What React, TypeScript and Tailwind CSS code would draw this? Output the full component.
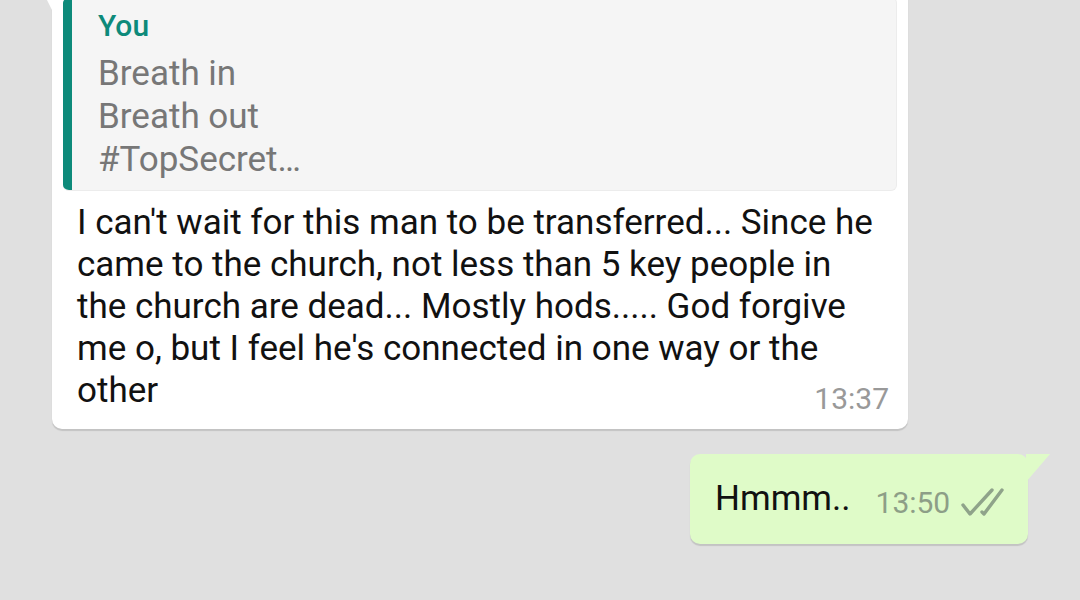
import React from "react";

export default function App() {
  const font = { fontFamily: "Roboto, 'Noto Sans', sans-serif" };
  return (
    <div className="w-[1080px] h-[600px] bg-[#e0e0e0] overflow-hidden" style={font}>
      {/* incoming */}
      <div className="relative ml-[52px] mt-[-14px] w-[856px] bg-white rounded-[10px] shadow-[0_2px_1px_rgba(0,0,0,0.13)] px-[11px] pt-[11px] pb-[17px]">
        <div className="absolute left-[-12px] top-0 w-[14px] h-[28px] bg-white [clip-path:polygon(0_0,100%_0,100%_100%)]" />
        <div className="flex bg-[#f5f5f5] rounded-[6px] overflow-hidden border border-[#ececec] border-l-0">
          <div className="w-[9px] bg-[#0d8a7a] shrink-0" />
          <div className="pl-[26px] pt-[12px] pb-[9px]">
            <div className="text-[30px] leading-[32px] font-medium text-[#0d8a7a]">You</div>
            <div className="text-[35px] leading-[43px] text-[#777] mt-[10px]">
              <div>Breath in</div>
              <div>Breath out</div>
              <div>#TopSecret…</div>
            </div>
          </div>
        </div>
        <div className="pl-[14px] pr-[8px] pt-[11px] text-[35px] leading-[42px] text-[#111]">
          I can't wait for this man to be transferred... Since he came to the church, not less than 5 key people in the church are dead... Mostly hods..... God forgive me o, but I feel he's connected in one way or the other
          <span className="float-right relative top-[8px] text-[30px] leading-[42px] text-[#999]">13:37</span>
        </div>
      </div>

      {/* outgoing */}
      <div className="flex justify-end pr-[52px] mt-[25px]">
        <div className="relative w-[338px] h-[90px] bg-[#dffbc8] rounded-[10px] shadow-[0_2px_1px_rgba(0,0,0,0.13)] flex items-center pl-[25px]">
          <div className="absolute right-[-22px] top-0 w-[24px] h-[28px] bg-[#dffbc8] [clip-path:polygon(0_0,100%_0,0_100%)]" />
          <span className="text-[35px] text-[#111] leading-[40px]">Hmmm..</span>
          <span className="ml-[25px] text-[30px] text-[#8d9e87] leading-[40px] mt-[8px]">13:50</span>
          <svg className="ml-[10px] mt-[6px]" width="44" height="30" viewBox="0 0 44 30" fill="none" stroke="#8fa38a" strokeWidth="3.4" strokeLinecap="round" strokeLinejoin="round">
            <path d="M3 18 L10 27 L32 3" />
            <path d="M22 25 L24 27 L42 3" />
          </svg>
        </div>
      </div>
    </div>
  );
}
